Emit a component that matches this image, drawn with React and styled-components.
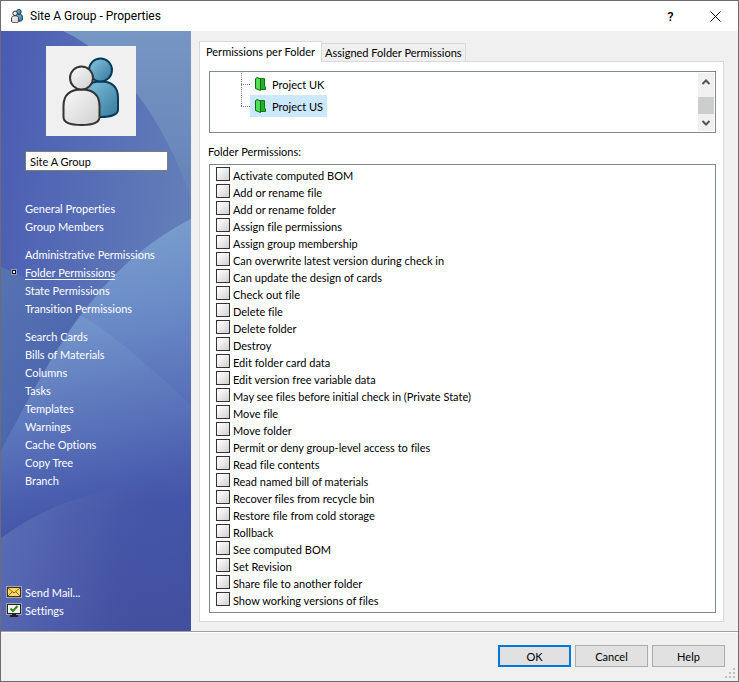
import { useState } from 'react';
import styled, { createGlobalStyle, css } from 'styled-components';

const uiFont = `Lato, 'Noto Sans', sans-serif`;

const GlobalStyle = createGlobalStyle`
  *, *::before, *::after {
    box-sizing: border-box;
  }

  body {
    margin: 0;
    background: #f0f0f0;
    color: #000;
    font-family: ${uiFont};
    font-size: 11px;
    font-variant-ligatures: none;
  }

  button, input {
    font: inherit;
    color: inherit;
  }

  ul {
    list-style: none;
    margin: 0;
    padding: 0;
  }
`;

const Dialog = styled.div`
  display: flex;
  flex-direction: column;
  min-height: 100vh;
  border: 1px solid #6d6d6f;
  background: #f0f0f0;
`;

const TitleBar = styled.header`
  display: flex;
  align-items: center;
  height: 30px;
  padding-left: 9px;
  background: #fff;
`;

const Title = styled.h1`
  flex: 1;
  margin: 0 0 0 6px;
  font-family: Roboto, sans-serif;
  font-size: 12px;
  font-weight: 400;
`;

const TitleButton = styled.button`
  display: flex;
  align-items: center;
  justify-content: center;
  width: 45px;
  height: 30px;
  padding: 0;
  border: none;
  background: none;
  font-family: Roboto, sans-serif;
  font-size: 13px;
  font-weight: 500;
`;

const Body = styled.div`
  display: flex;
  flex: 1;
`;

const Sidebar = styled.aside`
  position: relative;
  isolation: isolate;
  display: flex;
  flex-direction: column;
  width: 190px;
  flex-shrink: 0;
  padding: 15px 0 12px;
  color: #fff;
`;

const Backdrop = styled.svg`
  position: absolute;
  inset: 0;
  z-index: -1;
  width: 100%;
  height: 100%;
`;

const Portrait = styled.div`
  display: flex;
  align-items: center;
  justify-content: center;
  align-self: center;
  width: 90px;
  height: 90px;
  margin-right: 10px;
  background: #f0f0f0;
`;

const NameInput = styled.input`
  width: 143px;
  height: 20px;
  margin: 15px 0 28px 24px;
  padding: 0 4px;
  border: 1px solid #7a7a7a;
  background: #fff;
  color: #000;
`;

const Nav = styled.nav`
  display: flex;
  flex-direction: column;
  flex: 1;
  gap: 10px;
`;

const NavItem = styled.li`
  display: flex;
  align-items: center;
  height: 18px;
`;

const NavMarker = styled.span`
  display: flex;
  align-items: center;
  justify-content: center;
  width: 24px;
  padding-left: 2px;
`;

const Bullet = styled.span`
  width: 4px;
  height: 4px;
  border: 1px solid #111;
  background: #fff;
  outline: 1px solid #8f9cc8;
`;

const NavLink = styled.a`
  color: #fff;
  text-decoration: ${({ $current }) => ($current ? 'underline' : 'none')};
  text-underline-offset: 2px;
`;

const Content = styled.main`
  display: flex;
  flex-direction: column;
  flex: 1;
  padding: 10px 14px 9px 8px;
`;

const TabList = styled.div`
  display: flex;
  align-items: flex-end;
`;

const Tab = styled.button`
  height: 18px;
  padding: 0 3px;
  border: 1px solid #d9d9d9;
  border-left: none;
  border-bottom: none;
  background: #f0f0f0;
  white-space: nowrap;

  ${({ $active }) =>
    $active &&
    css`
      position: relative;
      height: 21px;
      margin-bottom: -1px;
      padding: 0 6px 2px;
      border-left: 1px solid #d9d9d9;
      background: #fff;
    `}
`;

const TabPanel = styled.section`
  display: flex;
  flex-direction: column;
  flex: 1;
  padding: 9px 7px 8px 9px;
  border: 1px solid #d9d9d9;
  background: #fff;
`;

const TreeBox = styled.div`
  display: flex;
  justify-content: space-between;
  height: 62px;
  padding: 1px;
  border: 1px solid #828790;
`;

const Tree = styled.ul`
  padding-left: 30px;
`;

const TreeRow = styled.li`
  display: flex;
  height: 22px;
`;

const TreeLabel = styled.button`
  display: flex;
  align-items: center;
  gap: 5px;
  height: 22px;
  padding: 0 4px;
  border: none;
  background: ${({ $selected }) => ($selected ? '#cce8ff' : 'transparent')};
`;

const ScrollBar = styled.div`
  display: flex;
  flex-direction: column;
  width: 16px;
  background: #f0f0f0;
`;

const ScrollArrow = styled.button`
  display: flex;
  align-items: center;
  justify-content: center;
  height: 17px;
  padding: 0;
  border: none;
  background: none;
`;

const ScrollThumb = styled.div`
  height: 17px;
  margin-top: auto;
  background: #cdcdcd;
`;

const ListTitle = styled.h2`
  margin: 11px 0 5px -1px;
  font-size: 11px;
  font-weight: 400;
  line-height: 15px;
`;

const PermissionList = styled.ul`
  flex: 1;
  padding: 2px 6px 3px;
  border: 1px solid #828790;
`;

const PermissionLabel = styled.label`
  display: flex;
  align-items: center;
  gap: 3px;
  height: 17px;
`;

const CheckBox = styled.input`
  appearance: none;
  width: 14px;
  height: 14px;
  margin: 0 0 3px;
  border: 1px solid #333;
  background: linear-gradient(135deg, #fff 10%, #cfcfcf);

  &:checked {
    box-shadow: inset 0 0 0 3px #f4f4f4;
    background: #333;
  }
`;

const Footer = styled.footer`
  display: flex;
  align-items: flex-start;
  justify-content: flex-end;
  gap: 4px;
  height: 50px;
  padding-top: 13px;
  border-top: 1px solid #a0a0a0;
  box-shadow: inset 0 1px #fff;
`;

const DialogButton = styled.button`
  width: 73px;
  height: 22px;
  padding: 0;
  border: ${({ $primary }) => ($primary ? '2px solid #0078d7' : '1px solid #adadad')};
  background: #e1e1e1;
`;

const SizeGrip = styled.svg`
  align-self: flex-end;
  margin: 0 2px 2px -4px;
`;

const navGroups = [
  ['General Properties', 'Group Members'],
  [
    'Administrative Permissions',
    'Folder Permissions',
    'State Permissions',
    'Transition Permissions',
  ],
  [
    'Search Cards',
    'Bills of Materials',
    'Columns',
    'Tasks',
    'Templates',
    'Warnings',
    'Cache Options',
    'Copy Tree',
    'Branch',
  ],
];

const permissions = [
  'Activate computed BOM',
  'Add or rename file',
  'Add or rename folder',
  'Assign file permissions',
  'Assign group membership',
  'Can overwrite latest version during check in',
  'Can update the design of cards',
  'Check out file',
  'Delete file',
  'Delete folder',
  'Destroy',
  'Edit folder card data',
  'Edit version free variable data',
  'May see files before initial check in (Private State)',
  'Move file',
  'Move folder',
  'Permit or deny group-level access to files',
  'Read file contents',
  'Read named bill of materials',
  'Recover files from recycle bin',
  'Restore file from cold storage',
  'Rollback',
  'See computed BOM',
  'Set Revision',
  'Share file to another folder',
  'Show working versions of files',
];

const PeopleIcon = ({ size, stroke, id }) => (
  <svg width={size} height={size} viewBox="0 0 70 70" aria-hidden="true">
    <defs>
      <linearGradient id={`${id}-blue`} x1="0" y1="0" x2="1" y2="1">
        <stop offset="0" stopColor="#86c6e2" />
        <stop offset="1" stopColor="#36789b" />
      </linearGradient>
      <linearGradient id={`${id}-grey`} x1="0" y1="0" x2="1" y2="1">
        <stop offset="0" stopColor="#fafafa" />
        <stop offset="1" stopColor="#cfcfcf" />
      </linearGradient>
    </defs>
    <g fill={`url(#${id}-blue)`} stroke="#06395a" strokeWidth={stroke}>
      <path d="M26 42C26 31 33 25.500 45 25.500S62 31 62 42V54C62 58 56 61 45 61S26 58 26 54Z" />
      <circle cx="44.500" cy="14" r="11.500" />
    </g>
    <g fill={`url(#${id}-grey)`} stroke="#333" strokeWidth={stroke}>
      <path d="M7.500 50C7.500 39 14 33.500 25.500 33.500S43.500 39 43.500 50V61C43.500 66 37 69 25.500 69S7.500 66 7.500 61Z" />
      <circle cx="25.500" cy="22" r="11.500" />
    </g>
  </svg>
);

const SidebarArt = () => (
  <Backdrop viewBox="0 0 190 600" preserveAspectRatio="none" aria-hidden="true">
    <defs>
      <linearGradient id="art-base" x1="0" y1="0" x2="1" y2="0.400">
        <stop offset="0" stopColor="#4a5cb3" />
        <stop offset="1" stopColor="#6480b9" />
      </linearGradient>
      <linearGradient id="art-sky" x1="0" y1="0" x2="0" y2="1">
        <stop offset="0" stopColor="#7696c3" />
        <stop offset="1" stopColor="#6683b9" />
      </linearGradient>
      <linearGradient id="art-left" x1="0" y1="0" x2="0.300" y2="1">
        <stop offset="0" stopColor="#5673b2" />
        <stop offset="1" stopColor="#4359a8" />
      </linearGradient>
      <linearGradient id="art-dome" x1="0.450" y1="0" x2="0.550" y2="1">
        <stop offset="0" stopColor="#7da1cf" />
        <stop offset="0.250" stopColor="#6a8bc7" />
        <stop offset="0.480" stopColor="#5870b9" />
        <stop offset="0.720" stopColor="#4456aa" />
        <stop offset="1" stopColor="#42509f" />
      </linearGradient>
      <linearGradient id="art-shine" x1="0" y1="0" x2="0.200" y2="1">
        <stop offset="0" stopColor="#82a6d0" stopOpacity="0.400" />
        <stop offset="1" stopColor="#6080c0" stopOpacity="0" />
      </linearGradient>
      <linearGradient id="art-floor" x1="0" y1="0.300" x2="1" y2="0.500">
        <stop offset="0" stopColor="#5b6cb6" />
        <stop offset="0.500" stopColor="#4d5dab" stopOpacity="0.700" />
        <stop offset="0.850" stopColor="#424f9f" stopOpacity="0" />
      </linearGradient>
    </defs>
    <rect width="190" height="600" fill="url(#art-base)" />
    <path d="M62 0C118 26 162 88 190 166V0Z" fill="url(#art-sky)" />
    <path d="M0 236C30 248 58 265 82 286L57 600H0Z" fill="url(#art-left)" />
    <path d="M190 188C105 232 62 300 0 420V600H190Z" fill="url(#art-dome)" />
    <path
      d="M79 284C112 303 142 330 190 374V470H0V420C27 367 52 322 79 284Z"
      fill="url(#art-shine)"
    />
    <path d="M0 507C45 475 92 455 190 449V600H0Z" fill="url(#art-floor)" />
  </Backdrop>
);

const FolderIcon = () => (
  <svg width="13" height="14" viewBox="0 0 13 14" aria-hidden="true">
    <path d="M5.500 1.500H10.500V9L11.500 10V12.500H6Z" fill="#1db526" stroke="#0b7a12" />
    <path d="M1.500 1.500L3 0.500L6.500 2V13.500L1.500 11.500Z" fill="#4fe058" stroke="#0b6a10" />
  </svg>
);

const MailIcon = () => (
  <svg width="16" height="12" viewBox="0 0 16 12" aria-hidden="true">
    <rect x="0.500" y="0.500" width="15" height="11" fill="#3a3320" stroke="#a5a5b4" />
    <rect x="2" y="2" width="12" height="8" fill="#ffd866" />
    <path d="M2 2L8 7L14 2M2 10L6 6M14 10L10 6" fill="none" stroke="#8a5f10" />
  </svg>
);

const MonitorIcon = () => (
  <svg width="16" height="14" viewBox="0 0 16 14" aria-hidden="true">
    <rect x="0.500" y="0.500" width="15" height="11" fill="#222" stroke="#a5a5b4" />
    <rect x="2" y="2" width="12" height="8" fill="#f2f4f2" />
    <path d="M6 11H10V12H12V14H4V12H6Z" fill="#222" />
    <path d="M4.500 5.500L7 8L11.500 3" fill="none" stroke="#2f8a12" strokeWidth="2" />
  </svg>
);

const Connector = ({ last }) => (
  <svg width="9" height="22" viewBox="0 0 9 22" aria-hidden="true">
    <path
      d={last ? 'M0.500 0V12' : 'M0.500 0V22'}
      stroke="#808080"
      strokeDasharray="1 1"
    />
    <path d="M0 11.500H9" stroke="#808080" strokeDasharray="1 1" />
  </svg>
);

const Chevron = ({ down }) => (
  <svg width="10" height="6" viewBox="0 0 10 6" aria-hidden="true">
    <path
      d={down ? 'M1.500 1L5 4.500L8.500 1' : 'M1.500 5L5 1.500L8.500 5'}
      fill="none"
      stroke="#555"
      strokeWidth="2"
    />
  </svg>
);

function App() {
  const [name, setName] = useState('Site A Group');
  const [current, setCurrent] = useState('Folder Permissions');
  const [folder, setFolder] = useState('Project US');

  const folders = ['Project UK', 'Project US'];

  return (
    <Dialog>
      <GlobalStyle />
      <TitleBar>
        <PeopleIcon size={14} stroke={5} id="small" />
        <Title>Site A Group - Properties</Title>
        <TitleButton aria-label="Help">?</TitleButton>
        <TitleButton aria-label="Close">
          <svg width="11" height="11" viewBox="0 0 11 11">
            <path d="M0.500 0.500L10.500 10.500M10.500 0.500L0.500 10.500" stroke="#000" />
          </svg>
        </TitleButton>
      </TitleBar>

      <Body>
        <Sidebar>
          <SidebarArt />
          <Portrait>
            <PeopleIcon size={70} stroke={2} id="large" />
          </Portrait>
          <NameInput
            aria-label="Group name"
            value={name}
            onChange={(e) => setName(e.target.value)}
          />
          <Nav>
            {navGroups.map((group) => (
              <ul key={group[0]}>
                {group.map((item) => (
                  <NavItem key={item}>
                    <NavMarker>{item === current && <Bullet />}</NavMarker>
                    <NavLink
                      href="#"
                      $current={item === current}
                      onClick={() => setCurrent(item)}
                    >
                      {item}
                    </NavLink>
                  </NavItem>
                ))}
              </ul>
            ))}
          </Nav>
          <ul>
            <NavItem>
              <NavMarker>
                <MailIcon />
              </NavMarker>
              <NavLink href="#">Send Mail...</NavLink>
            </NavItem>
            <NavItem>
              <NavMarker>
                <MonitorIcon />
              </NavMarker>
              <NavLink href="#">Settings</NavLink>
            </NavItem>
          </ul>
        </Sidebar>

        <Content>
          <TabList role="tablist">
            <Tab role="tab" aria-selected="true" $active>
              Permissions per Folder
            </Tab>
            <Tab role="tab" aria-selected="false">
              Assigned Folder Permissions
            </Tab>
          </TabList>
          <TabPanel role="tabpanel">
            <TreeBox>
              <Tree>
                {folders.map((item, i) => (
                  <TreeRow key={item}>
                    <Connector last={i === folders.length - 1} />
                    <TreeLabel
                      $selected={item === folder}
                      onClick={() => setFolder(item)}
                    >
                      <FolderIcon />
                      {item}
                    </TreeLabel>
                  </TreeRow>
                ))}
              </Tree>
              <ScrollBar>
                <ScrollArrow aria-label="Scroll up">
                  <Chevron />
                </ScrollArrow>
                <ScrollThumb />
                <ScrollArrow aria-label="Scroll down">
                  <Chevron down />
                </ScrollArrow>
              </ScrollBar>
            </TreeBox>

            <ListTitle>Folder Permissions:</ListTitle>
            <PermissionList>
              {permissions.map((permission) => (
                <li key={permission}>
                  <PermissionLabel>
                    <CheckBox type="checkbox" />
                    {permission}
                  </PermissionLabel>
                </li>
              ))}
            </PermissionList>
          </TabPanel>
        </Content>
      </Body>

      <Footer>
        <DialogButton $primary>OK</DialogButton>
        <DialogButton>Cancel</DialogButton>
        <DialogButton>Help</DialogButton>
        <SizeGrip width="11" height="11" viewBox="0 0 11 11" aria-hidden="true">
          <path
            d="M8 0h2v2h-2zM8 4h2v2h-2zM8 8h2v2h-2zM4 4h2v2h-2zM4 8h2v2h-2zM0 8h2v2h-2z"
            fill="#bfbfbf"
          />
        </SizeGrip>
      </Footer>
    </Dialog>
  );
}

export default App;
